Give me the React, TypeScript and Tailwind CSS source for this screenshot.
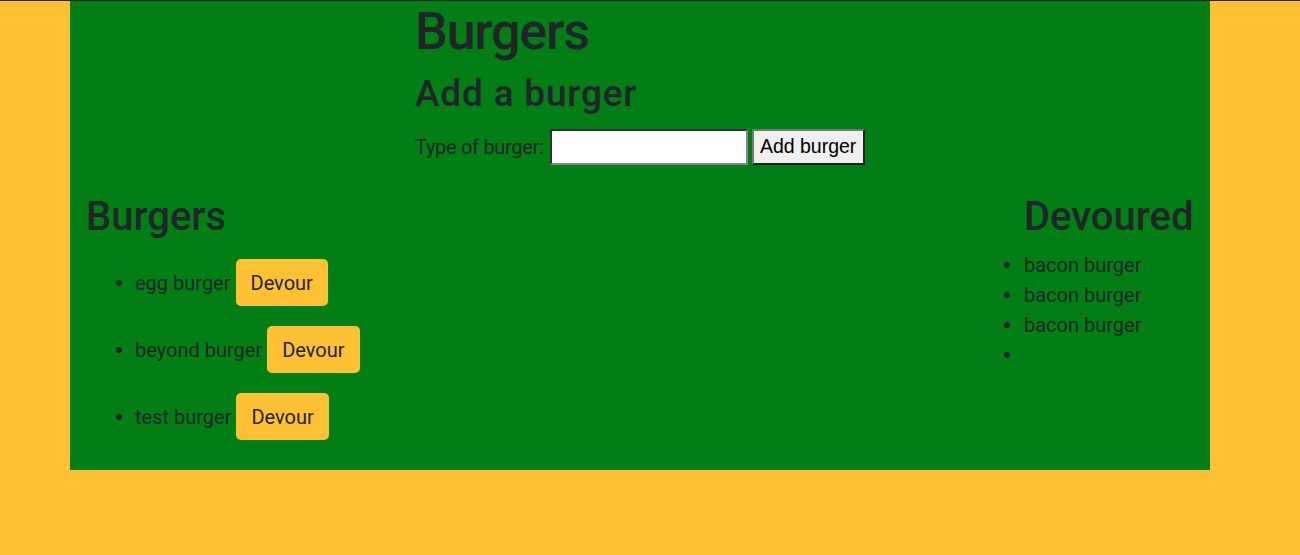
import React from "react";

const font = { fontFamily: "Roboto, 'Noto Sans', sans-serif" };

function Dot() {
  return <span className="inline-block w-[6px] h-[6px] rounded-full bg-[#212529] shrink-0" />;
}

function DevourItem({ name }: { name: string }) {
  return (
    <li className="flex items-center h-[47px]">
      <span className="w-[19px] flex justify-start shrink-0">
        <Dot />
      </span>
      <span className="text-[20px] leading-[30px]">{name}</span>
      <button className="ml-[5px] h-[47px] px-[15px] bg-[#ffc134] rounded-[5px] text-[20px] leading-[30px] text-[#212529]">
        Devour
      </button>
    </li>
  );
}

function EatenItem({ name }: { name: string }) {
  return (
    <li className="flex items-center h-[30px]">
      <span className="w-[20px] flex justify-start shrink-0">
        <Dot />
      </span>
      <span className="text-[20px] leading-[30px]">{name}</span>
    </li>
  );
}

export default function App() {
  return (
    <div className="min-h-[555px] bg-[#ffc134]" style={font}>
      <div className="h-px bg-[#212529]" />
      <div className="ml-[70px] w-[1140px] h-[469px] bg-[#017f15] text-[#212529]">
        <div className="pl-[345px]">
          <h1 className="pt-[1px] text-[52px] leading-[60px] font-medium tracking-[-1.2px]">Burgers</h1>
          <h3 className="mt-[11px] text-[37px] leading-[42px] font-medium tracking-[0.8px]">Add a burger</h3>
          <div className="mt-[14px] flex items-center h-[36px]">
            <span className="text-[20px] leading-[30px] tracking-[-0.3px]">Type of burger:</span>
            <input
              className="ml-[6px] w-[198px] h-[36px] bg-white border-2 border-[#858585] outline-none"
              style={{ borderStyle: "inset" }}
            />
            <button
              className="ml-[4px] w-[113px] h-[36px] bg-[#efefef] border-2 border-[#767676] text-black text-[19.5px]"
              style={{ fontFamily: "'Liberation Sans', Arial, sans-serif", borderStyle: "outset" }}
            >
              Add burger
            </button>
          </div>
        </div>
        <div className="mt-[28px] flex justify-between">
          <div className="pl-[16px]">
            <h2 className="text-[40px] leading-[48px] font-medium">Burgers</h2>
            <ul className="mt-[18px] pl-[30px] flex flex-col gap-[20px]">
              <DevourItem name="egg burger" />
              <DevourItem name="beyond burger" />
              <DevourItem name="test burger" />
            </ul>
          </div>
          <div className="pr-[16px] w-[221px] pl-[15px]">
            <h2 className="pl-[20px] text-[40px] leading-[48px] font-medium">Devoured</h2>
            <ul className="mt-[9px]">
              <EatenItem name="bacon burger" />
              <EatenItem name="bacon burger" />
              <EatenItem name="bacon burger" />
              <EatenItem name="" />
            </ul>
          </div>
        </div>
      </div>
    </div>
  );
}
